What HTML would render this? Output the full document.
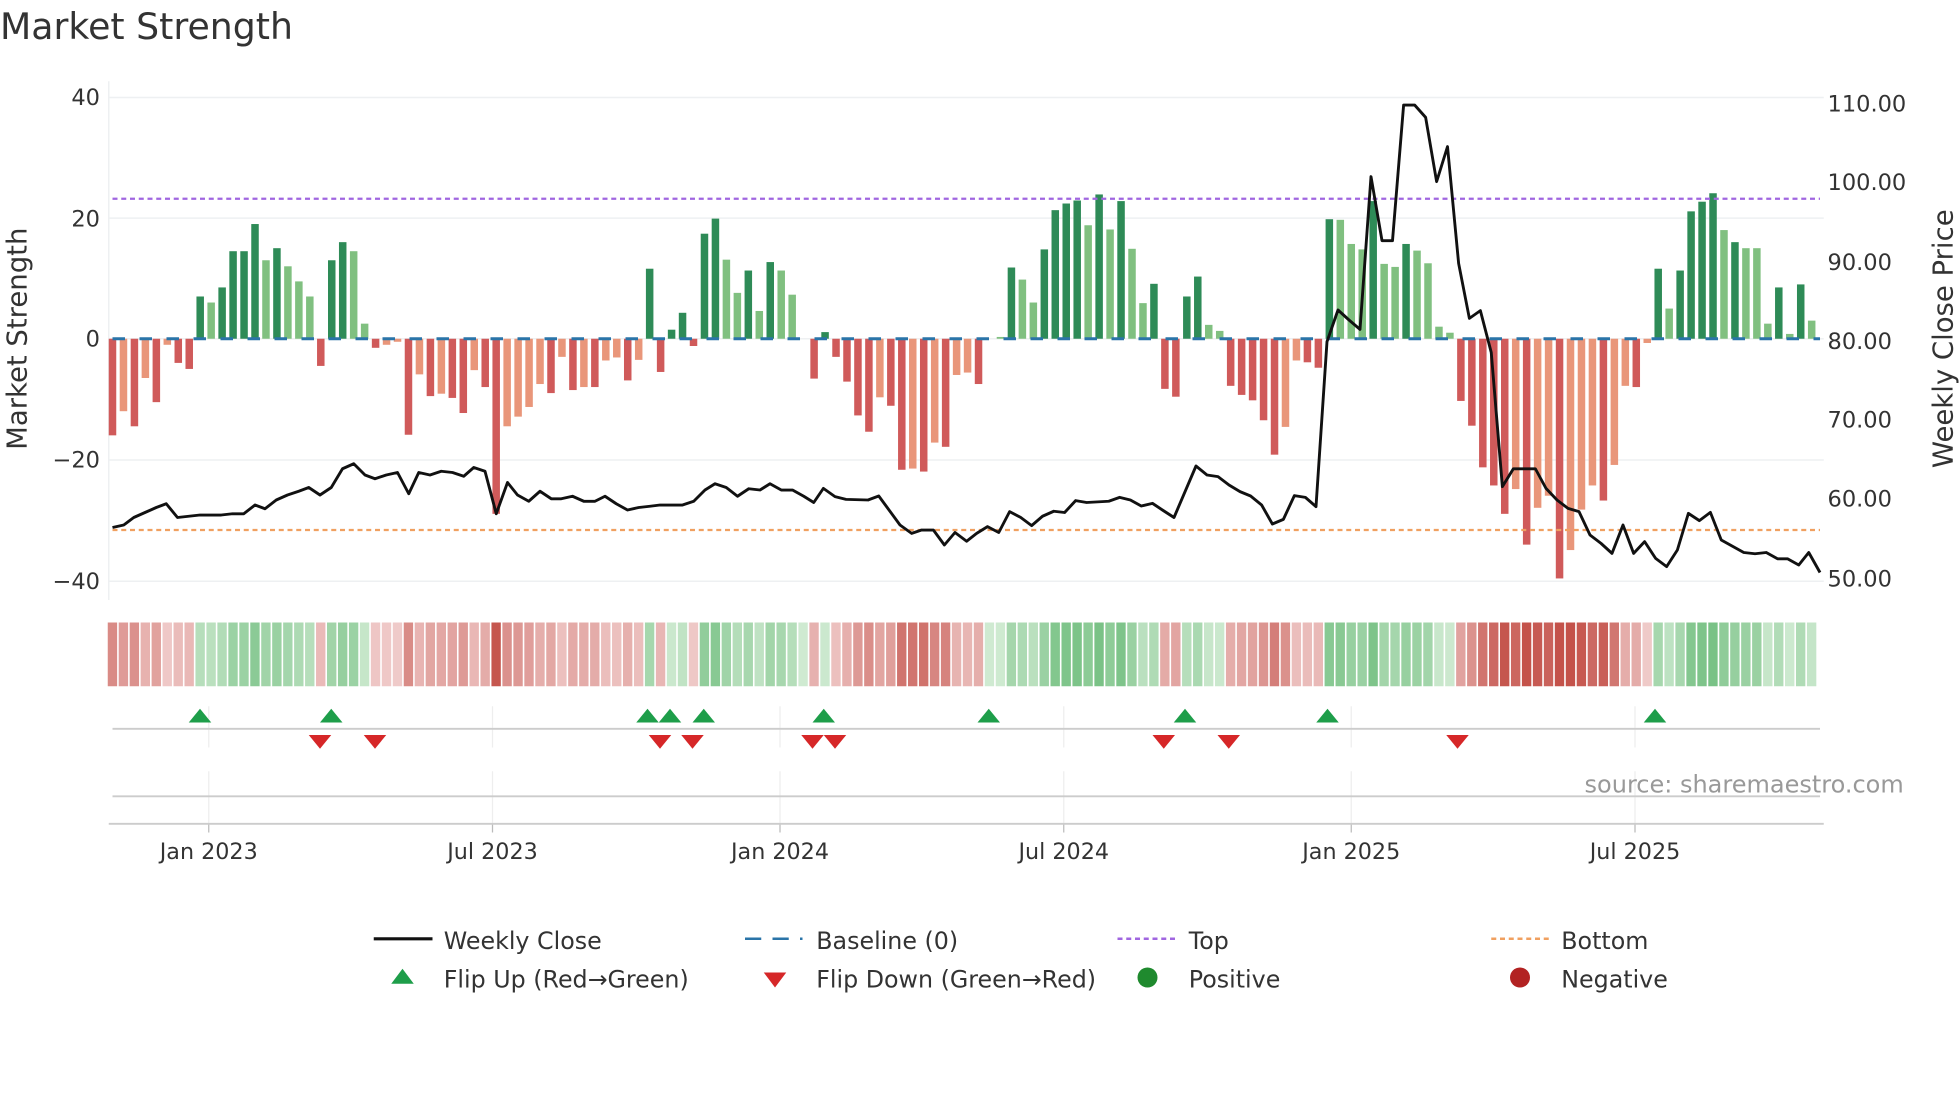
<!DOCTYPE html>
<html><head><meta charset="utf-8"><style>
html,body{margin:0;padding:0;background:#fff;}
svg{display:block;font-family:"DejaVu Sans","Liberation Sans",sans-serif;}
</style></head><body>
<svg id="c" width="1960" height="1102" viewBox="0 0 1568 881.6" xmlns="http://www.w3.org/2000/svg">
<rect width="1568" height="882" fill="#fff"/>
<text x="0" y="31" font-size="29" fill="#333">Market Strength</text>
<g id="grid"></g>
<g id="bars"></g>
<g id="over"></g>
<g id="strip"></g>
<g id="marks"></g>
<g font-size="18" fill="#333">
<text x="80" y="84" text-anchor="end">40</text>
<text x="80" y="181" text-anchor="end">20</text>
<text x="80" y="277" text-anchor="end">0</text>
<text x="80" y="374" text-anchor="end">−20</text>
<text x="80" y="471" text-anchor="end">−40</text>
<text x="1462" y="89">110.00</text>
<text x="1462" y="152">100.00</text>
<text x="1462" y="216">90.00</text>
<text x="1462" y="279">80.00</text>
<text x="1462" y="342">70.00</text>
<text x="1462" y="405">60.00</text>
<text x="1462" y="469">50.00</text>
</g>
<text transform="translate(21,271) rotate(-90)" text-anchor="middle" font-size="22" fill="#333">Market Strength</text>
<text transform="translate(1562,271) rotate(-90)" text-anchor="middle" font-size="22" fill="#333">Weekly Close Price</text>
<g font-size="17.8" fill="#333" text-anchor="middle">
<text x="167" y="687">Jan 2023</text>
<text x="394" y="687">Jul 2023</text>
<text x="624" y="687">Jan 2024</text>
<text x="851" y="687">Jul 2024</text>
<text x="1081" y="687">Jan 2025</text>
<text x="1308" y="687">Jul 2025</text>
</g>
<text x="1523" y="634" text-anchor="end" font-size="19.2" fill="#999">source: sharemaestro.com</text>
<g font-size="19" fill="#333">
<line x1="299" y1="751" x2="346" y2="751" stroke="#111" stroke-width="2.5"/>
<text x="355" y="759">Weekly Close</text>
<line x1="596" y1="751" x2="642" y2="751" stroke="#2a74a8" stroke-width="2" stroke-dasharray="13 9"/>
<text x="653" y="759">Baseline (0)</text>
<line x1="894" y1="751" x2="940" y2="751" stroke="#a066e0" stroke-width="2" stroke-dasharray="4 3"/>
<text x="951" y="759">Top</text>
<line x1="1193" y1="751" x2="1239" y2="751" stroke="#f0a060" stroke-width="2" stroke-dasharray="4 3"/>
<text x="1249" y="759">Bottom</text>
<polygon points="313,787 331,787 322,775" fill="#1e9e4a"/>
<text x="355" y="790">Flip Up (Red→Green)</text>
<polygon points="611,778 629,778 620,790" fill="#d62728"/>
<text x="653" y="790">Flip Down (Green→Red)</text>
<circle cx="918" cy="782" r="8" fill="#1f8a2e"/>
<text x="951" y="790">Positive</text>
<circle cx="1216" cy="782" r="8" fill="#b22222"/>
<text x="1249" y="790">Negative</text>
</g>
</svg>
<script>
var NS="http://www.w3.org/2000/svg";
function el(g,t,a){var e=document.createElementNS(NS,t);for(var k in a)e.setAttribute(k,a[k]);document.getElementById(g).appendChild(e);return e;}
var B="-16R -12O -14.5R -6.5O -10.5R -1O -4R -5R 7G 6L 8.5G 14.5G 14.5G 19G 13L 15G 12L 9.5L 7L -4.5R 13G 16G 14.5L 2.5L -1.5R -1O -0.5O -15.9R -5.9O -9.5R -9.1O -9.8R -12.3R -5.2O -8R -29R -14.5O -12.9O -11.3O -7.5O -9R -3O -8.5R -8O -8R -3.6O -3.1O -6.9R -3.5O 11.6G -5.5R 1.5G 4.3G -1.2R 17.4G 19.9G 13.1L 7.6L 11.3G 4.6L 12.7G 11.3L 7.3L 0L -6.6R 1.1G -3R -7.1R -12.7R -15.4R -9.7O -11.1R -21.7R -21.5O -22R -17.2O -17.9R -6O -5.6O -7.5R 0L 0.3L 11.8G 9.8L 6L 14.8G 21.3G 22.4G 22.9G 18.8L 23.9G 18.1L 22.8G 14.9L 5.9L 9.1G -8.3R -9.6R 7G 10.3G 2.3L 1.3L -7.8R -9.3R -10.2R -13.5R -19.2R -14.6O -3.6O -3.9R -4.8R 19.8G 19.7L 15.7L 14.8L 22.8G 12.4L 11.9L 15.7G 14.6L 12.5L 2L 1L -10.3R -14.4R -21.3R -24.3R -29R -24.9O -34.1R -28O -26O -39.7R -35O -28.3O -24.3O -26.8R -20.9O -7.8O -8R -0.7O 11.6G 5L 11.3G 21.1G 22.7G 24.1G 18L 16G 15L 15L 2.5L 8.5G 0.8L 9G 3L".split(" ");
var col={R:"#d05a5a",O:"#e9967a",G:"#2e8b57",L:"#80c080"};
[78,174.5,271,368,465].forEach(function(y){el("grid","line",{x1:87,x2:1459,y1:y,y2:y,stroke:"#eef0f2","stroke-width":1.2});});
el("grid","line",{x1:87,x2:87,y1:65,y2:480,stroke:"#eef0f2","stroke-width":1.2});
[167,394,624,851,1081,1308].forEach(function(x){
 el("grid","line",{x1:x,x2:x,y1:565,y2:598,stroke:"#eee","stroke-width":1});
 el("grid","line",{x1:x,x2:x,y1:617,y2:659,stroke:"#eee","stroke-width":1});
 el("grid","line",{x1:x,x2:x,y1:659,y2:666,stroke:"#bbb","stroke-width":1});
});
el("grid","line",{x1:90,x2:1456,y1:583,y2:583,stroke:"#ccc","stroke-width":1.5});
el("grid","line",{x1:90,x2:1456,y1:637,y2:637,stroke:"#ccc","stroke-width":1.5});
el("grid","line",{x1:87,x2:1459,y1:659,y2:659,stroke:"#ccc","stroke-width":1.5});
function mix(a,b,t){var r=[];for(var i=0;i<3;i++)r.push(Math.round(a[i]+(b[i]-a[i])*t));return "rgb("+r.join(",")+")";}
B.forEach(function(s,i){
 var c=s.slice(-1),v=parseFloat(s.slice(0,-1));var x=90+8.77*i;
 var h=Math.abs(v)*4.83;var y=v>=0?271-h:271;
 if(h>0.3)el("bars","rect",{x:x-3,y:y,width:6,height:h,fill:col[c]});
 var t=Math.min(Math.abs(v)/30,1)*0.85+0.15;
 var f=(c=="G"||c=="L")?mix([226,243,226],[100,184,115],t):mix([248,226,226],[196,82,74],t);
 el("strip","rect",{x:x-3.8,y:498,width:7.5,height:51,fill:f});
});
el("over","line",{x1:90,x2:1456,y1:271,y2:271,stroke:"#2a74a8","stroke-width":2.4,"stroke-dasharray":"10 11.6"});
el("over","line",{x1:90,x2:1456,y1:159,y2:159,stroke:"#a066e0","stroke-width":1.8,"stroke-dasharray":"4 3"});
el("over","line",{x1:90,x2:1456,y1:424,y2:424,stroke:"#f0a060","stroke-width":1.8,"stroke-dasharray":"4 3"});
var P=[[90,422],[99,420],[107,414],[116,410],[125,406],[133,403],[142,414],[151,413],[160,412],[168,412],[177,412],[186,411],[195,411],[204,404],[212,407],[221,400],[230,396],[239,393],[247,390],[256,396],[265,390],[274,375],[283,371],[292,380],[300,383],[309,380],[318,378],[327,395],[335,378],[344,380],[353,377],[362,378],[371,381],[379,374],[388,377],[397,411],[406,386],[414,396],[423,401],[432,393],[441,399],[449,399],[458,397],[467,401],[476,401],[484,397],[493,403],[502,408],[511,406],[520,405],[528,404],[537,404],[546,404],[555,401],[564,392],[572,387],[581,390],[590,397],[599,391],[608,392],[616,387],[625,392],[634,392],[643,397],[651,402],
[658.7,390.7],[668,397.3],[676.8,399.5],[694.4,400],[703,396.8],[720,420],[729.3,426.7],[737.3,424],[746.7,424],[755.5,436],[764,426],[773.3,433],[781.3,426.7],[790,421.3],[799,426],[807.7,409.3],[816.5,413.9],[825.3,420.5],[834,413],[843,409],[851.7,410],[860.5,400.5],[869.3,402],[887,401],[895.7,397.9],[904.3,400],[913,404.8],[922,402.7],[930.7,408.5],[939.2,414],[956.8,372.8],[965.6,380],[974.4,381.3],[983.2,388],[992,393.3],[1000.5,396.8],[1009.3,404],
[1017.9,419.2],[1026.7,415.5],[1035.5,396.5],[1044.3,397.9],[1052.8,405.3],[1061.6,273.3],[1070.4,248],[1079.2,256],[1088,263.5],[1096.8,141.3],[1105.6,192.5],[1114,192.5],[1122.9,84],[1131.7,84],[1140.5,93.9],[1149.3,145.3],[1158,117.3],[1166.9,210.7],[1175.5,254.7],[1184.3,248.5],[1193,282],[1201.9,389.3],[1210.7,375],[1219.5,375],[1228.3,375],[1236.8,390.7],[1245.6,400],[1254.4,406.7],[1263.2,409.3],[1272,428],[1280.8,434.7],[1289.6,442.7],[1298.4,420],[1306.9,442.7],[1315.7,433.3],[1324.5,446.7],[1333.3,453.3],[1341.9,440],[1350.7,410.7],[1359.5,416.5],[1368.3,409.9],[1377,432],[1386,437],[1395,442],[1404,443],[1413,442],[1422,447],[1430,447],[1439,452],[1447,442],[1456,458]];
el("over","polyline",{points:P.map(function(p){return p.join(",");}).join(" "),fill:"none",stroke:"#111","stroke-width":2.3,"stroke-linejoin":"round"});
[160,265,518,536,563,659,791,948,1062,1324].forEach(function(x){el("marks","polygon",{points:(x-9)+",578 "+(x+9)+",578 "+x+",567",fill:"#1e9e4a"});});
[256,300,528,554,650,668,931,983,1166].forEach(function(x){el("marks","polygon",{points:(x-9)+",588 "+(x+9)+",588 "+x+",599",fill:"#d62728"});});
</script>
</body></html>
